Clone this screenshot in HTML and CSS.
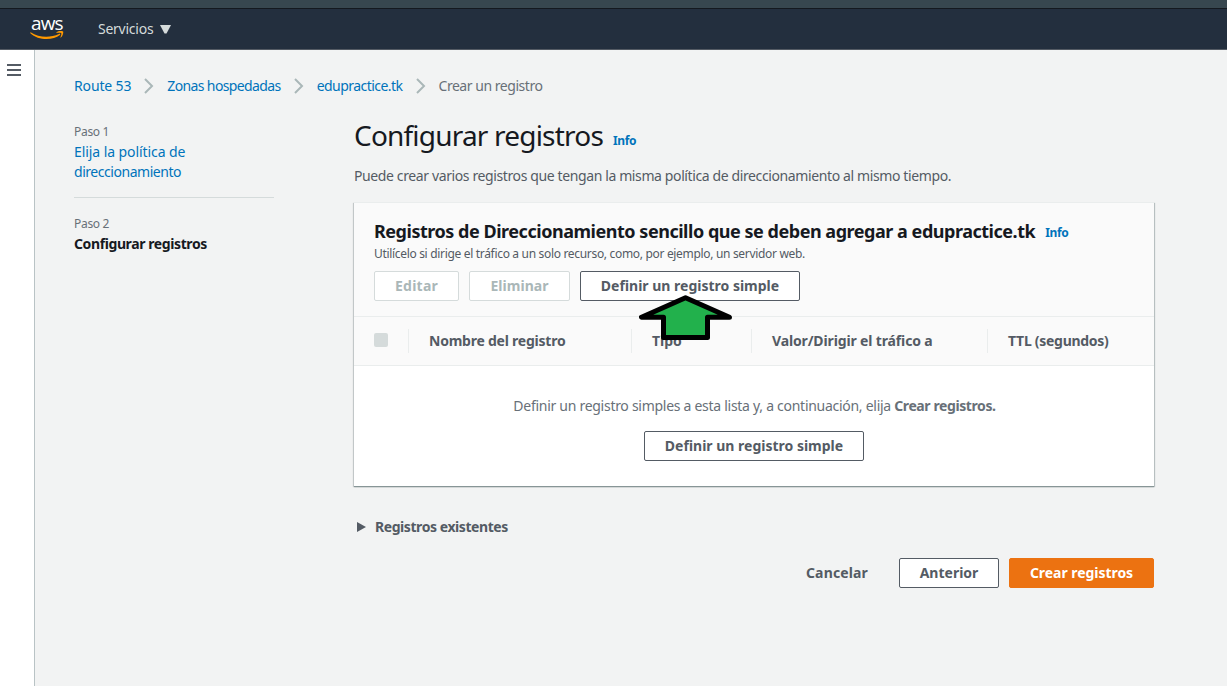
FILE: index.html
```html
<!DOCTYPE html>
<html lang="es">
<head>
<meta charset="utf-8">
<title>Route 53</title>
<link rel="stylesheet" href="styles.css">
</head>
<body>
<div class="browser-edge"></div>
<header class="topbar">
  <div class="logo">
    <span class="logo-text">aws</span>
    <svg class="logo-smile" width="34" height="10" viewBox="0 0 34 10"><path d="M.6 1.200C9 7 20.500 7 29 3c1-.5 1.600.3.900 1C23 9.600 8.500 10 .1 2z" fill="#f90"/><path d="M26.500 1.200c2-1.400 6-1.500 6.600-.8.500.8-.2 4.600-2.200 6.200-.4.300-.6.100-.5-.2.500-1.200 1.300-3.500.9-4.100-.5-.6-3-.5-4.500-.4-.5 0-.6-.4-.3-.7z" fill="#f90"/></svg>
  </div>
  <div class="services"><span class="services-label">Servicios</span><svg width="11" height="9" viewBox="0 0 11 9"><path d="M0 0h11L6.500 8.500h-2z" fill="#d5dbdb"/></svg></div>
</header>
<div class="shell">
  <aside class="rail"><svg width="14" height="12" viewBox="0 0 14 12"><path d="M0 0h14v2H0zM0 5h14v2H0zM0 10h14v2H0z" fill="#545b64"/></svg></aside>
  <main class="main">
    <nav class="crumbs">
      <a class="link crumb-a">Route 53</a>
      <svg class="chev" width="10" height="16" viewBox="0 0 10 16"><path d="M1 1l7 7-7 7" fill="none" stroke="#aab7b8" stroke-width="2"/></svg>
      <a class="link crumb-b">Zonas hospedadas</a>
      <svg class="chev" width="10" height="16" viewBox="0 0 10 16"><path d="M1 1l7 7-7 7" fill="none" stroke="#aab7b8" stroke-width="2"/></svg>
      <a class="link crumb-c">edupractice.tk</a>
      <svg class="chev" width="10" height="16" viewBox="0 0 10 16"><path d="M1 1l7 7-7 7" fill="none" stroke="#aab7b8" stroke-width="2"/></svg>
      <span class="crumb-last">Crear un registro</span>
    </nav>
    <div class="columns">
      <div class="steps">
        <div class="step">
          <div class="step-no">Paso 1</div>
          <a class="link step-link"><span class="step-l1">Elija la política de</span><br><span class="step-l2">direccionamiento</span></a>
        </div>
        <div class="step">
          <div class="step-no">Paso 2</div>
          <div class="step-current">Configurar registros</div>
        </div>
      </div>
      <section class="content">
        <div class="title-row"><h1>Configurar registros</h1><a class="info">Info</a></div>
        <p class="intro">Puede crear varios registros que tengan la misma política de direccionamiento al mismo tiempo.</p>
        <div class="card">
          <div class="card-head">
            <div class="card-title"><h2>Registros de Direccionamiento sencillo que se deben agregar a edupractice.tk</h2><a class="info">Info</a></div>
            <p class="card-desc">Utilícelo si dirige el tráfico a un solo recurso, como, por ejemplo, un servidor web.</p>
            <div class="actions">
              <button class="btn off edit"><span>Editar</span></button>
              <button class="btn off remove"><span>Eliminar</span></button>
              <div class="pointed">
                <button class="btn define"><span>Definir un registro simple</span></button>
                <svg class="arrow" width="94" height="48" viewBox="0 0 94 48"><path d="M46.500 2.800L2.500 22.200h22v20.300h44V22.200h22z" fill="#22b14c" stroke="#000" stroke-width="5" stroke-linejoin="round"/></svg>
              </div>
            </div>
          </div>
          <div class="thead">
            <div class="th th-check"><span class="check"></span></div>
            <div class="th"><span class="h-name">Nombre del registro</span></div>
            <div class="th"><span class="h-type">Tipo</span></div>
            <div class="th"><span class="h-value">Valor/Dirigir el tráfico a</span></div>
            <div class="th"><span class="h-ttl">TTL (segundos)</span></div>
          </div>
          <div class="empty">
            <p class="empty-text">Definir un registro simples a esta lista y, a continuación, elija <b>Crear registros.</b></p>
            <button class="btn define"><span>Definir un registro simple</span></button>
          </div>
        </div>
        <div class="expander"><svg width="9" height="10" viewBox="0 0 9 10"><path d="M0 0l9 5-9 5z" fill="#545b64"/></svg><span class="existing">Registros existentes</span></div>
        <div class="footer">
          <button class="btn plain"><span>Cancelar</span></button>
          <button class="btn prev"><span>Anterior</span></button>
          <button class="btn primary"><span>Crear registros</span></button>
        </div>
      </section>
    </div>
  </main>
</div>
</body>
</html>
```
FILE: styles.css
```css
* { box-sizing: border-box; }
body { margin: 0; height: 686px; overflow: hidden; display: flex; flex-direction: column; background: #f2f3f3; color: #545b64; font: 14px/20px "Noto Sans", "Open Sans", sans-serif; white-space: nowrap; }
h1, h2, p { margin: 0; }
.browser-edge { height: 9px; flex: none; background: #37474f; border-bottom: 1px solid #14191f; }
.topbar { height: 41px; flex: none; display: flex; align-items: flex-start; background: #232f3e; border-bottom: 1px solid #545b64; padding-left: 30px; }
.logo { width: 68px; height: 32px; display: flex; flex-direction: column; padding-top: 4px; }
.logo-text { font: 500 19px/20px "Open Sans", sans-serif; letter-spacing: -0.9px; color: #fff; height: 18px; padding-left: 1px; }
.logo-smile { flex: none; }
.services { display: flex; align-items: center; gap: 7px; padding-top: 10px; color: #d5dbdb; }
.services-label { letter-spacing: -0.25px; }
.shell { flex: 1; display: flex; min-height: 0; }
.rail { width: 35px; background: #fff; border-right: 1px solid #b9c3c5; padding: 14px 0 0 7px; }
.rail svg { display: block; }
.main { padding: 26px 0 0 39px; }
.link, .info { color: #0073bb; }
.crumbs { display: flex; align-items: center; height: 20px; }
.crumb-a { letter-spacing: -0.15px; }
.crumb-b { letter-spacing: -0.62px; }
.crumb-c { letter-spacing: -0.54px; }
.crumb-last { color: #687078; letter-spacing: -0.46px; }
.chev { margin: 0 13px; }
.columns { display: flex; margin-top: 16px; }
.steps { width: 200px; margin-right: 80px; padding-top: 10px; }
.step + .step { border-top: 1px solid #d5dbdb; margin-top: 15px; padding-top: 16px; }
.step-no { font-size: 12px; color: #687078; letter-spacing: -0.3px; }
.step-link { display: block; }
.step-l1 { letter-spacing: -0.08px; }
.step-l2 { letter-spacing: -0.46px; }
.step-current { font-weight: 700; color: #16191f; letter-spacing: -0.4px; }
.content { width: 800px; }
.title-row { display: flex; align-items: baseline; height: 46px; line-height: 46px; gap: 10px; }
h1 { font-size: 28px; font-weight: 400; color: #16191f; letter-spacing: -0.8px; }
.info { font-size: 12px; font-weight: 700; letter-spacing: -0.4px; position: relative; top: -1px; }
.intro { margin-top: 8px; letter-spacing: -0.385px; }
.card { margin-top: 16px; height: 284px; background: #fff; box-shadow: 0 1px 1px 0 #879596, 1px 1px 1px 0 rgba(0,28,36,.2), -1px 1px 1px 0 rgba(0,28,36,.15); }
.card-head { height: 115px; background: #fafafa; border-top: 1px solid #eaeded; border-bottom: 1px solid #eaeded; padding: 17px 20px 0; }
.card-title { display: flex; align-items: baseline; gap: 10px; height: 24px; line-height: 22px; }
h2 { font-size: 18px; line-height: 22px; font-weight: 700; color: #16191f; letter-spacing: -0.47px; }
.card-desc { font-size: 12px; letter-spacing: -0.32px; }
.actions { display: flex; gap: 10px; margin-top: 7px; }
.pointed { position: relative; }
.arrow { position: absolute; left: 59px; top: 24px; z-index: 2; }
.btn { display: flex; justify-content: center; align-items: center; height: 30px; padding: 0; background: #fff; border: 1px solid #545b64; border-radius: 2px; color: #545b64; font: 700 14px/20px "Noto Sans", sans-serif; }
.off { border-color: #d5dbdb; color: #aab7b8; }
.edit { width: 85px; letter-spacing: 0.25px; }
.remove { width: 101px; letter-spacing: 0.05px; }
.define { width: 220px; }
.thead { display: grid; grid-template-columns: 54px 223px 120px 236px 167px; height: 49px; align-items: center; background: #fafafa; border-bottom: 1px solid #eaeded; font-weight: 700; }
.th { height: 24px; line-height: 24px; padding-left: 20px; border-left: 1px solid #eaeded; }
.th-check { border: 0; }
.h-name { letter-spacing: -0.23px; }
.h-value { letter-spacing: -0.14px; }
.h-ttl { letter-spacing: -0.28px; }
.check { display: block; width: 14px; height: 14px; margin-top: 4px; border-radius: 2px; background: #d5dbdb; }
.empty { display: flex; flex-direction: column; align-items: center; padding-top: 30px; gap: 15px; }
.empty-text { color: #687078; padding-left: 1px; letter-spacing: -0.28px; }
.empty-text b { letter-spacing: -0.4px; }
.expander { display: flex; align-items: center; gap: 9px; padding-left: 3px; margin-top: 31px; font-weight: 700; }
.existing { letter-spacing: -0.43px; }
.footer { display: flex; justify-content: flex-end; gap: 10px; margin-top: 21px; }
.plain { width: 104px; background: none; border-color: transparent; letter-spacing: 0.15px; }
.prev { width: 100px; }
.primary { width: 145px; background: #ec7211; border-color: #ec7211; color: #fff; letter-spacing: -0.04px; }
```
